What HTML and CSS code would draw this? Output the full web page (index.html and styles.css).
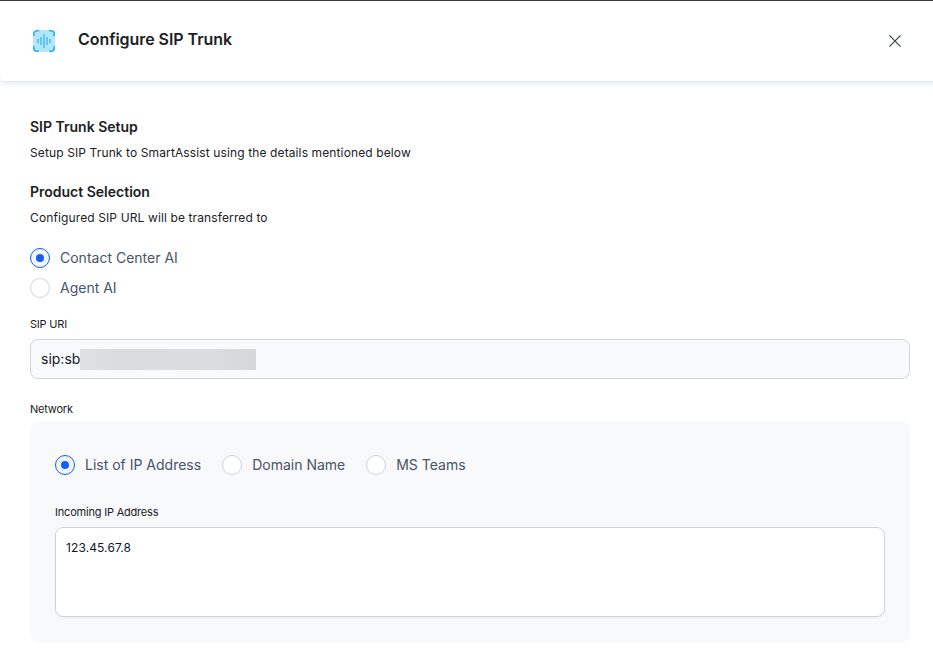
FILE: index.html
```html
<!DOCTYPE html>
<html lang="en">
<head>
<meta charset="utf-8">
<title>Configure SIP Trunk</title>
<link rel="stylesheet" href="styles.css">
</head>
<body>
<header class="header">
  <svg class="logo" width="22" height="22" viewBox="0 0 22 22" fill="none">
    <rect width="22" height="22" rx="4" fill="#b3e5fc"/>
    <path d="M.8 6V4A3.2 3.2 0 0 1 4 .8h2M16 .8h2A3.2 3.2 0 0 1 21.2 4v2M21.2 16v2a3.2 3.2 0 0 1-3.2 3.2h-2M6 21.2H4A3.2 3.2 0 0 1 .8 18v-2" stroke="#29b6f6" stroke-width="1.6"/>
    <path d="M5 9v4M8 7v8M11 4v14M14 7v8M17 9v4" stroke="#4fc3f7" stroke-width="1.7"/>
  </svg>
  <h1 class="title">Configure SIP Trunk</h1>
  <button class="close" aria-label="Close">
    <svg width="12" height="12" viewBox="0 0 12 12"><path d="M.4.4l11.2 11.2M11.6.4L.4 11.6" stroke="#344054" stroke-width="1.2"/></svg>
  </button>
</header>
<main class="content">
  <section class="intro">
    <h2 class="heading">SIP Trunk Setup</h2>
    <p class="text">Setup SIP Trunk to SmartAssist using the details mentioned below</p>
  </section>
  <section class="intro">
    <h2 class="heading">Product Selection</h2>
    <p class="text">Configured SIP URL will be transferred to</p>
  </section>
  <div class="products">
    <label class="option"><span class="radio checked"></span><span class="name">Contact Center AI</span></label>
    <label class="option"><span class="radio"></span><span class="name">Agent AI</span></label>
  </div>
  <div class="label">SIP URI</div>
  <div class="uri"><span class="name">sip:sb</span><span class="redacted"></span></div>
  <div class="label">Network</div>
  <section class="panel">
    <div class="networks">
      <label class="option"><span class="radio checked"></span><span class="name">List of IP Address</span></label>
      <label class="option"><span class="radio"></span><span class="name">Domain Name</span></label>
      <label class="option"><span class="radio"></span><span class="name">MS Teams</span></label>
    </div>
    <div class="label">Incoming IP Address</div>
    <div class="addresses">123.45.67.8</div>
  </section>
</main>
</body>
</html>
```
FILE: styles.css
```css
* { box-sizing: border-box; }
body {
  margin: 0;
  height: 649px;
  overflow: hidden;
  background: #fff;
  border-top: 1px solid #363642;
  font-family: Inter, "Liberation Sans", sans-serif;
  color: #202124;
}
h1, h2, p { margin: 0; }
.header {
  display: flex;
  align-items: center;
  height: 80px;
  margin-right: -12px;
  padding: 0 44px 0 33px;
  border-radius: 0 0 0 5px;
  box-shadow: 0 2px 6px #dbe8f0;
}
.title {
  margin: -4px 0 0 23px;
  font-size: 16px;
  font-weight: 600;
  line-height: 24px;
  letter-spacing: -.05px;
}
.close {
  display: flex;
  margin-left: auto;
  padding: 0;
  border: 0;
  background: none;
}
.content { padding: 36px 23px 0 30px; }
.intro { height: 65px; }
.heading {
  font-size: 14px;
  font-weight: 600;
  line-height: 20px;
}
.text {
  margin-top: 6px;
  font-size: 12px;
  line-height: 20px;
  letter-spacing: .12px;
}
.products {
  display: grid;
  gap: 10px;
  margin: 1px 0 16px;
}
.option {
  display: flex;
  align-items: center;
  gap: 10px;
  height: 20px;
  font-size: 14px;
  color: #475467;
}
.name {
  height: 20px;
  line-height: 19px;
}
.radio {
  display: flex;
  align-items: center;
  justify-content: center;
  width: 20px;
  height: 20px;
  border: 1px solid #d0d5dd;
  border-radius: 50%;
  background: #fff;
}
.checked {
  border-color: #155eef;
  background: #eff4ff;
}
.checked::after {
  content: "";
  width: 8px;
  height: 8px;
  border-radius: 50%;
  background: #155eef;
}
.label {
  height: 25px;
  font-size: 11px;
  line-height: 20px;
  letter-spacing: -.2px;
}
.uri {
  display: flex;
  align-items: center;
  height: 40px;
  margin-bottom: 20px;
  padding-left: 10px;
  border: 1px solid #d0d5dd;
  border-radius: 8px;
  background: #f9fafb;
  font-size: 14px;
  color: #101828;
}
.redacted {
  width: 176px;
  height: 21px;
  background: linear-gradient(90deg, #e0e1e3, #dadbdd 20%, #dbdcde 75%, #d6d7da);
}
.panel {
  height: 220px;
  margin-top: -2px;
  padding: 33px 25px 0;
  border-radius: 8px;
  background: #f8f9fb;
}
.networks {
  display: flex;
  gap: 21px;
  margin-bottom: 27px;
}
.addresses {
  height: 90px;
  padding: 10px;
  border: 1px solid #d0d5dd;
  border-radius: 8px;
  background: #fff;
  box-shadow: 0 1px 2px #1018280d;
  font-size: 12px;
  line-height: 20px;
  letter-spacing: .1px;
  color: #101828;
}
```
